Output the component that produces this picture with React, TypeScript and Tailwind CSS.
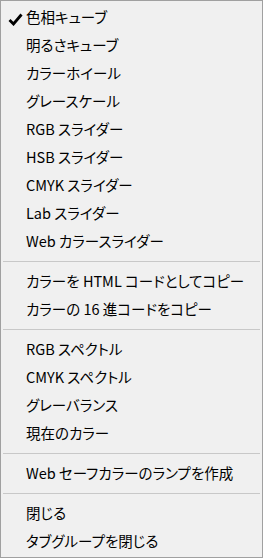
const groups: { label: string; checked?: boolean }[][] = [
  [
    { label: "色相キューブ", checked: true },
    { label: "明るさキューブ" },
    { label: "カラーホイール" },
    { label: "グレースケール" },
    { label: "RGB スライダー" },
    { label: "HSB スライダー" },
    { label: "CMYK スライダー" },
    { label: "Lab スライダー" },
    { label: "Web カラースライダー" },
  ],
  [{ label: "カラーを HTML コードとしてコピー" }, { label: "カラーの 16 進コードをコピー" }],
  [
    { label: "RGB スペクトル" },
    { label: "CMYK スペクトル" },
    { label: "グレーバランス" },
    { label: "現在のカラー" },
  ],
  [{ label: "Web セーフカラーのランプを作成" }],
  [{ label: "閉じる" }, { label: "タブグループを閉じる" }],
]

function Check() {
  return (
    <svg width="15" height="13" viewBox="0 0 15 13" className="absolute left-[7px] top-[10px]">
      <path d="M1.5 7 L5.5 11 L13.5 1.5" fill="none" stroke="#000" strokeWidth="2.8" />
    </svg>
  )
}

function MenuItem({ label, checked }: { label: string; checked?: boolean }) {
  return (
    <div className="relative flex h-[28px] items-center pl-[25px] text-[14.5px] text-black">
      {checked && <Check />}
      <span className="whitespace-nowrap [font-feature-settings:'palt']">{label}</span>
    </div>
  )
}

export default function App() {
  return (
    <div
      className="flex h-[558px] w-[263px] flex-col border border-[#a0a0a0] bg-[#f0f0f0] py-[2px]"
      style={{ fontFamily: "'Noto Sans CJK JP', 'Noto Sans', sans-serif" }}
    >
      {groups.map((group, gi) => (
        <div key={gi}>
          {gi > 0 && (
            <div className="flex h-[12px] items-center px-[2px]">
              <div className="h-px w-full bg-[#c8c8c8]" />
            </div>
          )}
          {group.map((item) => (
            <MenuItem key={item.label} {...item} />
          ))}
        </div>
      ))}
    </div>
  )
}
